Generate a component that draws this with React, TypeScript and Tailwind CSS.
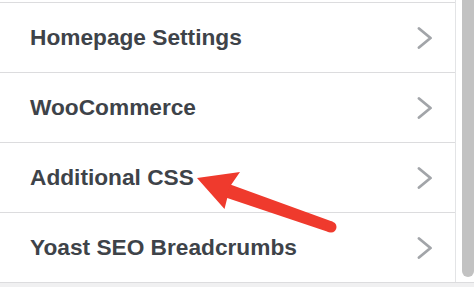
import React from "react";

const items = ["Homepage Settings", "WooCommerce", "Additional CSS", "Yoast SEO Breadcrumbs"];

function Chevron() {
  return (
    <svg width="16" height="22" viewBox="0 0 16 22" fill="none">
      <path d="M2 1.5 L13.5 11 L2 20.5" stroke="#a2a5a9" strokeWidth="2.8" strokeLinecap="round" strokeLinejoin="round" />
    </svg>
  );
}

export default function App() {
  return (
    <div className="relative w-[474px] h-[287px] bg-white overflow-hidden flex flex-col" style={{ fontFamily: '"Liberation Sans", Arial, sans-serif' }}>
      <div className="flex h-[282px]">
        <div className="w-[456px] border-r border-[#e3e4e6] pt-[2px]">
          {items.map((t) => (
            <div key={t} className="flex items-center justify-between h-[70px] border-t border-[#dcdcde] pl-[30px] pr-[22px]">
              <span className="text-[22.7px] font-bold text-[#3e4349] leading-none">{t}</span>
              <Chevron />
            </div>
          ))}
        </div>
        <div className="w-[6px]" />
        <div className="w-[12px] h-[277px] bg-[#c2c2c2] rounded-b-[6px]" />
      </div>
      <div className="flex-1 border-t border-[#dcdcde] bg-[#f0f0f1]" />
      <svg className="absolute left-0 top-0" width="474" height="287" viewBox="0 0 474 287">
        <path d="M197 178 L240 172 L231 185 L229 191 L224.5 209 Z" fill="#ef3a2d" />
        <path d="M230.3 184.4 L332.8 221.8 L329.2 232.2 L225.7 197.6 Z" fill="#ef3a2d" />
        <circle cx="331" cy="227" r="5.5" fill="#ef3a2d" />
      </svg>
    </div>
  );
}
